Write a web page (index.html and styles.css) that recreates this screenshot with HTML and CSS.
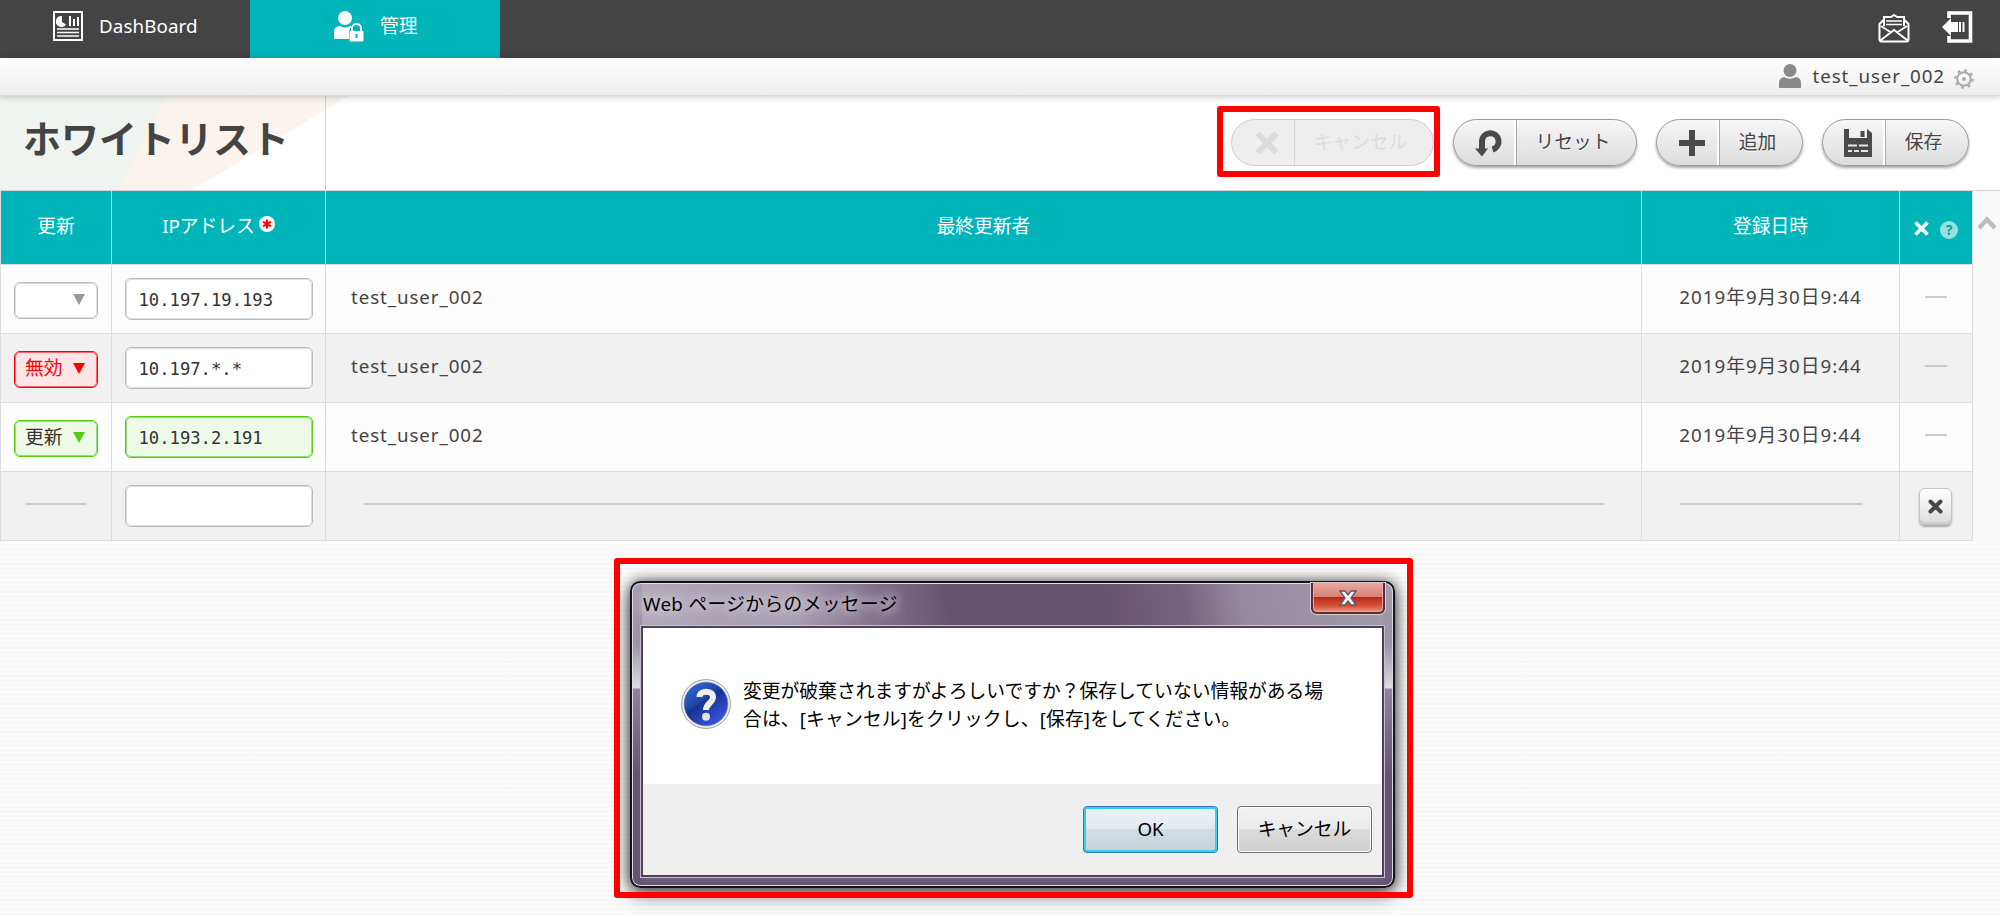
FILE: index.html
```html
<!DOCTYPE html>
<html lang="ja">
<head>
<meta charset="utf-8">
<title>ホワイトリスト</title>
<link rel="stylesheet" href="styles.css">
</head>
<body>
<nav class="topbar">
  <div class="tab tab-dash">
    <svg class="ico-dash" width="30" height="30" viewBox="0 0 30 30"><rect x="1" y="1" width="28" height="28" fill="none" stroke="#fff" stroke-width="2"/><path d="M9 5a5.500 5.500 0 1 0 4 8.500L9 11z" fill="#fff"/><path d="M17 5v10M21 8v7M25 6v9" stroke="#fff" stroke-width="2"/><path d="M4 18h22M4 21.500h22M4 25h22" stroke="#fff" stroke-width="1.500"/></svg>
    <span>DashBoard</span>
  </div>
  <div class="tab tab-admin">
    <svg class="ico-admin" width="30" height="31" viewBox="0 0 30 31"><circle cx="11" cy="7" r="7" fill="#fff"/><path d="M0 28v-7c0-4 3-6 6-6q5 3 10 0l1.500.8Q15 18 15 21v7z" fill="#fff"/><rect x="15.500" y="20" width="14" height="10.500" rx="1" fill="#fff"/><path d="M18 20v-3a4.500 4 0 0 1 9 0v3" fill="none" stroke="#fff" stroke-width="2"/><path d="M22.500 23v4" stroke="#00b5ba" stroke-width="2"/></svg>
    <span>管理</span>
  </div>
  <div class="top-icons">
    <svg width="32" height="30" viewBox="0 0 32 30" fill="none" stroke="#fff" stroke-width="2"><path d="M1.500 11v15.500q0 2 2 2h25q2 0 2-2V11L26 6.500V4H19l-3-2-3 2H6v2.500zM6 5v8M26 5v8M3 13l10 6.500M29 13l-10 6.500M3 27l13-10 13 10"/><path d="M8 8h16M8 11.500h16" stroke-width="1.500"/></svg>
    <svg width="32" height="32" viewBox="0 0 32 32"><path d="M7 7V2h21.500v28H7v-5" fill="none" stroke="#fff" stroke-width="3.600"/><path d="M0 16 9 7v4h5v10H9v4z" fill="#fff"/><path d="M15 11v10M18 11v10M21.500 11v10" stroke="#fff" stroke-width="2"/></svg>
  </div>
</nav>
<div class="userbar">
  <svg class="ico-user" width="22" height="25" viewBox="0 0 22 25" fill="#8a8a8a"><circle cx="11" cy="6.500" r="6.500"/><path d="M0 24v-5q0-5 5-6 6 3.500 12 0 5 1 5 6v5z"/></svg>
  <span class="uname">test_user_002</span>
  <svg class="ico-gear" width="20" height="20" viewBox="0 0 20 20" fill="none" stroke="#aaa"><circle cx="10" cy="10" r="6.800" stroke-width="2"/><circle cx="10" cy="10" r="8.700" stroke-width="2.200" stroke-dasharray="2.800 4.030"/><circle cx="10" cy="10" r="2" fill="#aaa" stroke="none"/></svg>
</div>
<header class="head">
  <div class="title">
    <svg class="title-bg" width="350" height="94" viewBox="0 0 350 94"><path d="M0 0H166L118 94H0z" fill="#eff4f1"/><path d="M166 0H348L192 94H118z" fill="#fbf4ee"/><path d="M166 0H202L180 94H118z" fill="#f9f2ed"/></svg>
    <h1>ホワイトリスト</h1>
  </div>
  <div class="actions">
    <div class="mark">
      <div class="pill disabled"><i><svg width="24" height="24" viewBox="0 0 24 24"><path d="M2.500 2.500l19 19M21.500 2.500l-19 19" stroke="#dcdcdc" stroke-width="6"/></svg></i><b>キャンセル</b></div>
    </div>
    <div class="pill reset"><i><svg width="30" height="30" viewBox="0 0 30 30"><path d="M8 22V13a8.300 8.300 0 1 1 10.500 8.500" fill="none" stroke="#4a4a4a" stroke-width="6"/><path d="M1 20.500h13L8 28.500z" fill="#4a4a4a"/></svg></i><b>リセット</b></div>
    <div class="pill add"><i><svg width="26" height="26" viewBox="0 0 26 26"><path d="M13 0v26M0 13h26" stroke="#4a4a4a" stroke-width="6"/></svg></i><b>追加</b></div>
    <div class="pill save"><i><svg width="28" height="28" viewBox="0 0 28 28"><path d="M0 0h5v9h18V0l5 4v24H0z" fill="#4a4a4a"/><path d="M18.500 2v6" stroke="#4a4a4a" stroke-width="4"/><path d="M4 16.500h9m2 0h9M4 22h4m2 0h5m2 0h7" stroke="#e6e6e6" stroke-width="1.800"/></svg></i><b>保存</b></div>
  </div>
</header>
<main class="body">
  <div class="grid">
    <div class="c h">更新</div><div class="c h ip">IPアドレス<em><svg width="16" height="16" viewBox="0 0 16 16"><circle cx="8" cy="8" r="8" fill="#fff"/><path d="M8 3.500v9M4 5.700l8 4.600M12 5.700l-8 4.600" stroke="#f00" stroke-width="2"/></svg></em></div><div class="c h">最終更新者</div><div class="c h">登録日時</div>
    <div class="c h tools"><svg width="15" height="15" viewBox="0 0 15 15"><path d="M1.500 1.500l12 12M13.500 1.500l-12 12" stroke="#fff" stroke-width="3.800"/></svg><span class="help">?</span></div>

    <div class="c"><div class="sel"><span></span><u></u></div></div><div class="c"><div class="inp">10.197.19.193</div></div><div class="c name">test_user_002</div><div class="c date">2019年9月30日9:44</div><div class="c"><s class="d22"></s></div>

    <div class="c alt"><div class="sel red"><span>無効</span><u></u></div></div><div class="c alt"><div class="inp">10.197.*.*</div></div><div class="c alt name">test_user_002</div><div class="c alt date">2019年9月30日9:44</div><div class="c alt"><s class="d22"></s></div>

    <div class="c"><div class="sel green"><span>更新</span><u></u></div></div><div class="c"><div class="inp green">10.193.2.191</div></div><div class="c name">test_user_002</div><div class="c date">2019年9月30日9:44</div><div class="c"><s class="d22"></s></div>

    <div class="c alt"><s class="d60"></s></div><div class="c alt"><div class="inp"></div></div><div class="c alt"><s class="d1240"></s></div><div class="c alt"><s class="d182"></s></div><div class="c alt"><div class="del"><svg width="15" height="15" viewBox="0 0 15 15"><path d="M2.500 2.500l10 10M12.500 2.500l-10 10" stroke="#484848" stroke-width="4" stroke-linecap="round"/></svg></div></div>
  </div>
  <div class="scroll"><svg width="18" height="16" viewBox="0 0 18 16"><path d="M1 13L9 4.500 17 13" fill="none" stroke="#bdbdbd" stroke-width="4.500"/></svg></div>
</main>

<div class="dialog">
  <div class="dtitle"><span>Web ページからのメッセージ</span>
    <div class="close"><svg width="18" height="16" viewBox="0 0 18 16"><path d="M1 1h5l3 4 3-4h5l-5 7 5 7h-5l-3-4-3 4H1l5-7z" fill="#f5f5f5" stroke="#555a6a" stroke-width="1.300"/></svg></div>
  </div>
  <div class="client">
    <div class="msg">
      <svg class="q" width="50" height="50" viewBox="0 0 50 50"><defs><linearGradient id="qb" x1="0" y1="0" x2=".7" y2="1"><stop offset="0" stop-color="#3a6fe0"/><stop offset=".48" stop-color="#1c43a4"/><stop offset=".5" stop-color="#15338f"/><stop offset="1" stop-color="#3a55e0"/></linearGradient></defs><circle cx="25" cy="25" r="24.400" fill="#f4f4f4" stroke="#999" stroke-width="1"/><circle cx="25" cy="25" r="22" fill="url(#qb)" stroke="#8894b8" stroke-width=".6"/><path d="M18.500 18C18.500 11 32 11 32 18c0 6-7 6-7 13" fill="none" stroke="#eee" stroke-width="6"/><circle cx="25" cy="37.800" r="4" fill="#e4e4e4"/></svg>
      <p>変更が破棄されますがよろしいですか？保存していない情報がある場<br><span class="l2">合は、[キャンセル]をクリックし、[保存]をしてください。</span></p>
    </div>
    <div class="btns"><div class="btn ok">OK</div><div class="btn">キャンセル</div></div>
  </div>
</div>
<div class="dialog-mark"></div>
</body>
</html>
```
FILE: styles.css
```css
* { box-sizing: border-box; }
body {
  margin: 0;
  width: 2000px;
  height: 915px;
  overflow: hidden;
  position: relative;
  color: #444;
  font: 18.750px/28px "Noto Sans", "Noto Sans CJK JP", sans-serif;
  background: repeating-linear-gradient(#fcfcfc 0, #fafafa 2.500px, #f5f5f5 3.500px, #fafafa 4.670px);
}
svg { display: block; flex: none; }

.topbar { display: flex; height: 58px; background: #444; color: #fff; }
.tab { width: 250px; height: 58px; display: flex; align-items: flex-start; }
.tab span { margin-top: 12px; }
.tab-dash { padding-left: 53px; }
.tab-dash span { margin-left: 16px; letter-spacing: .1px; }
.ico-dash { margin-top: 11px; }
.tab-admin { background: #00b5ba; padding-left: 84px; }
.tab-admin span { margin-left: 16px; }
.ico-admin { margin-top: 11px; }
.top-icons { margin-left: auto; padding: 11px 26px 0 0; display: flex; gap: 32px; }
.top-icons svg:first-child { margin-top: 2px; }

.userbar {
  height: 38px;
  display: flex;
  justify-content: flex-end;
  align-items: flex-start;
  padding-right: 26px;
  background: linear-gradient(#fff, #eee);
  border-bottom: 1px solid #ddd;
  box-shadow: 0 1px 7px rgba(0, 0, 0, .22);
  position: relative;
  z-index: 2;
}
.ico-user { margin-top: 6px; }
.uname { margin: 4px 9px 0 11px; letter-spacing: .9px; }
.ico-gear { margin-top: 11px; }

.head { display: flex; height: 95px; background: #fff; border-bottom: 1px solid #d4d4d4; }
.title { width: 326px; position: relative; }
.title::after { content: ""; position: absolute; top: 0; right: 0; width: 1px; height: 94px; background: #d0d0d0; }
.title-bg { position: absolute; left: 0; top: 0; }
h1 { margin: 0; padding: 18px 0 0 23px; font-size: 38px; line-height: 48px; font-weight: 700; white-space: nowrap; position: relative; }
.actions { flex: 1; display: flex; justify-content: flex-end; padding-right: 31px; align-items: flex-start; }
.mark { border: 6px solid #f00; border-radius: 3px; margin: 10px 13px 0 0; height: 71px; width: 223px; padding: 7px 0 0 8px; }
.pill {
  height: 47px;
  display: flex;
  border: 1px solid #999;
  border-radius: 24px;
  background: linear-gradient(#f7f7f7, #dcdcdc);
  box-shadow: 0 2px 3px rgba(0, 0, 0, .35);
  margin-top: 23px;
}
.pill i { width: 63px; border-right: 1px solid #aaa; box-shadow: inset -2px 0 #fff; display: flex; align-items: center; justify-content: center; padding-left: 8px; }
.pill b { flex: 1; font-weight: 400; text-align: center; line-height: 43px; text-shadow: 0 1px #fff; padding-right: 7px; white-space: nowrap; }
.pill.disabled { width: 203px; margin: 0; background: #eee; border-color: #ccc; color: #dcdcdc; box-shadow: none; }
.pill.disabled b { text-shadow: none; }
.pill.disabled i { border-color: #d4d4d4; box-shadow: none; }
.reset { width: 184px; }
.add { width: 147px; margin-left: 19px; }
.save { width: 147px; margin-left: 19px; }

.body { display: flex; }
.grid { display: grid; grid-template-columns: 111px 214px 1316px 258px 73px; grid-template-rows: 74px repeat(4, 69px); border-left: 1px solid #dcdcdc; width: 1973px; }
.c { border-right: 1px solid #dcdcdc; border-bottom: 1px solid #dcdcdc; background: #fdfdfd; display: flex; justify-content: center; align-items: center; }
.alt { background: #f1f1f1; }
.h { background: #00b5ba; color: #fff; padding-bottom: 4px; }
.ip em { margin: -4px 0 0 4px; }
.tools { gap: 11px; padding: 2px 0 0; }
.help { width: 18px; height: 18px; border-radius: 9px; background: #99dfe0; color: #00a5aa; font-size: 14px; line-height: 18px; font-weight: 700; text-align: center; margin-top: 2px; }
.name { justify-content: flex-start; padding: 0 0 4px 25px; letter-spacing: .9px; }
.date { padding-bottom: 4px; letter-spacing: 1px; }
.c s { height: 2px; background: #ccc; margin-top: -4px; }
.d22 { width: 22px; }
.d60 { width: 60px; }
.d182 { width: 182px; }
.d1240 { width: 1240px; }
.sel { width: 84px; height: 37px; margin-top: 3px; border: 1px solid #bbb; border-radius: 6px; background: #fff; display: flex; justify-content: space-between; padding: 0 12px 0 10px; color: #999; line-height: 31px; outline: 1px solid #ddd; outline-offset: -2px; }
.sel u { width: 0; border: 6px solid transparent; border-top: 11px solid; border-bottom: 0; height: 0; margin-top: 11px; }
.sel.red { color: #f00; border-color: #f00; background: #ffe6e6; outline-color: #f66; }
.sel.green { color: #5c1; border-color: #5c1; background: #eff9e8; outline-color: #9d7; }
.sel.green span { color: #333; }
.inp { width: 188px; height: 42px; border: 1px solid #bbb; border-radius: 6px; background: #fff; color: #333; font: 17.200px/43px "DejaVu Sans Mono", monospace; padding-left: 13px; outline: 1px solid #ddd; outline-offset: -2px; }
.inp.green { border-color: #5c1; background: #eff9e8; outline-color: #9d7; }
.del { width: 33px; height: 37px; margin-right: 1px; border: 1px solid #c4c4c4; border-radius: 6px; background: linear-gradient(#fff, #ddd); box-shadow: 0 2px 2px #aaa, inset 0 -2px #ccc; display: flex; align-items: center; justify-content: center; }
.scroll { width: 27px; background: #f9f9f9; padding: 24px 0 0 5px; }

.dialog {
  position: absolute;
  left: 630px;
  top: 581px;
  width: 765px;
  height: 307px;
  border: 2px solid #151318;
  border-radius: 10px;
  padding: 0 9px 9px;
  background:
    linear-gradient(#a79fb0 0, #9a92a5 60px, #dedbe2 105px, #8f849c 106px, #665473 190px, #665473) left / 10px 100% no-repeat,
    linear-gradient(#a79fb0 0, #9a92a5 60px, #dedbe2 105px, #8f849c 106px, #665473 190px, #665473) right / 10px 100% no-repeat,
    linear-gradient(#736181, #655372) bottom / 100% 11px no-repeat,
    linear-gradient(80deg, #b5adbc 0, #a79db0 26%, #7d6c89 37%, #6c5a79 43%, #655372 45%, #655372 64%, #75647f 74%, #968a9f 81%, #a49bad);
  box-shadow: inset 0 0 0 1px #e0dce5, 0 0 14px rgba(0, 0, 0, .65), 0 8px 18px rgba(0, 0, 0, .45);
  color: #000;
}
.dtitle { height: 43px; display: flex; justify-content: space-between; padding: 7px 0 0 2px; }
.dtitle span { height: 30px; white-space: nowrap; letter-spacing: .35px; text-shadow: 0 0 8px #d5cfda, 0 0 12px #d5cfda, 0 0 16px #d5cfda; }
.close { width: 74px; height: 31px; margin: -7px -1px 0 0; border: 2px solid #59303a; border-top: 0; border-radius: 0 0 6px 6px; box-shadow: 0 0 0 1px #d6cbd4, inset 0 0 0 1px #e5a7a0; background: linear-gradient(#e9a79f, #d97f76 48%, #b8281a 50%, #d8543a 80%, #e99b80); display: flex; align-items: center; justify-content: center; }
.client { height: 251px; border: 2px solid #4c4355; outline: 1px solid #c9c0cf; background: #efefef; }
.msg { height: 156px; background: #fff; display: flex; padding: 51px 0 0 38px; }
.msg p { margin: -2px 0 0 12px; font-size: 18.800px; line-height: 28px; white-space: nowrap; }
.l2 { letter-spacing: .15px; }
.btns { display: flex; gap: 19px; justify-content: flex-end; padding: 22px 10px 0 0; }
.btn { width: 135px; height: 47px; border: 1px solid #707070; border-radius: 4px; box-shadow: inset 0 0 0 1px #fcfcfc; background: linear-gradient(#f2f2f2, #ebebeb 48%, #dcdcdc 50%, #cecece); text-align: center; line-height: 44px; }
.ok { border-color: #2f79ad; box-shadow: inset 0 0 0 2px #35cdf5; background: linear-gradient(#eef3f6, #e2e9ed 48%, #d2dde3 50%, #c6d2da); }
.dialog-mark { position: absolute; left: 614px; top: 558px; width: 799px; height: 340px; border: 6px solid #f00; border-radius: 3px; }
```
